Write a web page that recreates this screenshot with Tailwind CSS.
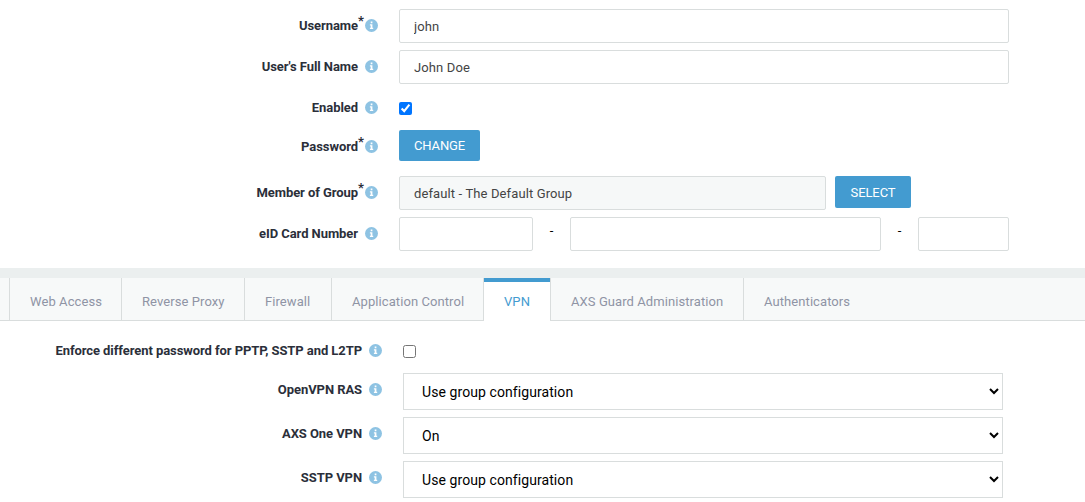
<!DOCTYPE html>
<html lang="en">
<head>
    <meta charset="UTF-8">
    <meta name="viewport" content="width=device-width, initial-scale=1.0">
    <title>User</title>
    <script src="https://cdn.jsdelivr.net/npm/@tailwindcss/browser@4"></script>
</head>
<body class="h-screen overflow-hidden bg-white font-['Roboto',sans-serif] text-[13px] leading-5 tracking-[0.12px] text-[#2b2f3a]">

    <svg class="hidden">
        <symbol id="info" viewBox="0 0 13 13">
            <circle cx="6.5" cy="6.5" r="6.5"/>
            <path fill="#fff" d="M5.7 2.6h1.7v1.6H5.7zM4.9 5.2h2.5v3.5h.8v1.2H4.9V8.7h.8V6.4h-.8z"/>
        </symbol>
    </svg>

    <!-- User details -->
    <form class="h-[268px] pt-[9px]">
        <div class="flex h-[41px] items-start">
            <label class="flex w-[378px] items-center justify-end pt-[7px] font-bold tracking-[-0.07px]">Username<sup class="top-[-5px] w-[7px] text-[13px]">*</sup><svg class="mb-0.5 size-[13px] fill-[#8ec3e3]"><use href="#info"/></svg></label>
            <input type="text" value="john" class="ml-[21px] h-[34px] w-[610px] rounded-xs border border-[#d9dddd] px-[14px] text-[#444]">
        </div>
        <div class="flex h-[41px] items-start">
            <label class="flex w-[378px] items-center justify-end gap-[7px] pt-[7px] font-bold tracking-[-0.07px]">User's Full Name<svg class="mb-0.5 size-[13px] fill-[#8ec3e3]"><use href="#info"/></svg></label>
            <input type="text" value="John Doe" class="ml-[21px] h-[34px] w-[610px] rounded-xs border border-[#d9dddd] px-[14px] text-[#444]">
        </div>
        <div class="flex h-[39px] items-start">
            <label class="flex w-[378px] items-center justify-end gap-[7px] pt-[7px] font-bold tracking-[-0.07px]">Enabled<svg class="mb-0.5 size-[13px] fill-[#8ec3e3]"><use href="#info"/></svg></label>
            <input type="checkbox" checked class="mt-[11px] ml-[21px] size-[13px]">
        </div>
        <div class="flex h-[46px] items-start">
            <label class="flex w-[378px] items-center justify-end pt-[7px] font-bold tracking-[-0.07px]">Password<sup class="top-[-5px] w-[7px] text-[13px]">*</sup><svg class="mb-0.5 size-[13px] fill-[#8ec3e3]"><use href="#info"/></svg></label>
            <button type="button" class="ml-[21px] h-[31px] w-[81px] rounded-xs bg-[#439bd0] tracking-[-0.1px] text-white">CHANGE</button>
        </div>
        <div class="flex h-[41px] items-start">
            <label class="flex w-[378px] items-center justify-end pt-[7px] font-bold tracking-[-0.07px]">Member of Group<sup class="top-[-5px] w-[7px] text-[13px]">*</sup><svg class="mb-0.5 size-[13px] fill-[#8ec3e3]"><use href="#info"/></svg></label>
            <input type="text" readonly value="default - The Default Group" class="ml-[21px] h-[34px] w-[427px] rounded-xs border border-[#d9dddd] bg-[#f6f8f8] px-[14px] text-[#444]">
            <button type="button" class="ml-[9px] h-[32px] w-[76px] rounded-xs bg-[#439bd0] pt-px tracking-[-0.1px] text-white">SELECT</button>
        </div>
        <div class="flex h-[34px] items-start">
            <label class="flex w-[378px] items-center justify-end gap-[7px] pt-[7px] font-bold tracking-[-0.07px]">eID Card Number<svg class="mb-0.5 size-[13px] fill-[#8ec3e3]"><use href="#info"/></svg></label>
            <input type="text" class="ml-[21px] h-[34px] w-[134px] rounded-xs border border-[#d9dddd]">
            <span class="w-[37px] pt-1 text-center text-black">-</span>
            <input type="text" class="h-[34px] w-[311px] rounded-xs border border-[#d9dddd]">
            <span class="w-[37px] pt-1 text-center text-black">-</span>
            <input type="text" class="h-[34px] w-[91px] rounded-xs border border-[#d9dddd]">
        </div>
    </form>

    <!-- Tabs -->
    <nav class="flex h-[53px] border-t-[10px] border-[#ebefef] bg-[#f7f9f9] tracking-[0.08px] text-[#8f94a5]">
        <div class="w-[9px] border-b border-[#d9dddd]"></div>
        <a class="w-[112px] border-b border-l border-[#d9dddd] pt-[14px] pl-5 whitespace-nowrap">Web Access</a>
        <a class="w-[123px] border-b border-l border-[#d9dddd] pt-[14px] pl-5 whitespace-nowrap">Reverse Proxy</a>
        <a class="w-[87px] border-b border-l border-[#d9dddd] pt-[14px] pl-5 whitespace-nowrap">Firewall</a>
        <a class="w-[152px] border-b border-l border-[#d9dddd] pt-[14px] pl-5 whitespace-nowrap">Application Control</a>
        <div class="flex w-[67px] border-l border-[#d9dddd]">
            <a class="w-full border-t-4 border-[#439bd0] bg-white pt-[10px] pl-5 text-[#439bd0]">VPN</a>
        </div>
        <a class="w-[193px] border-b border-l border-[#d9dddd] pt-[14px] pl-5 whitespace-nowrap">AXS Guard Administration</a>
        <a class="flex-1 border-b border-l border-[#d9dddd] pt-[14px] pl-5 whitespace-nowrap">Authenticators</a>
    </nav>

    <!-- VPN settings -->
    <form class="pt-5">
        <div class="flex h-8 items-start">
            <label class="flex w-[382px] items-center justify-end gap-[7px] font-bold tracking-[-0.07px]">Enforce different password for PPTP, SSTP and L2TP<svg class="mb-0.5 size-[13px] fill-[#8ec3e3]"><use href="#info"/></svg></label>
            <input type="checkbox" class="mt-1 ml-[21px] size-[13px]">
        </div>
        <div class="flex h-11 items-start">
            <label class="flex w-[382px] items-center justify-end gap-[7px] pt-[7px] font-bold tracking-[-0.07px]">OpenVPN RAS<svg class="mb-0.5 size-[13px] fill-[#8ec3e3]"><use href="#info"/></svg></label>
            <select class="ml-[21px] h-[37px] w-[600px] border border-[#d9dddd] bg-white px-[14px] text-sm tracking-[0.08px] text-black">
                <option>Use group configuration</option>
            </select>
        </div>
        <div class="flex h-11 items-start">
            <label class="flex w-[382px] items-center justify-end gap-[7px] pt-[7px] font-bold tracking-[-0.07px]">AXS One VPN<svg class="mb-0.5 size-[13px] fill-[#8ec3e3]"><use href="#info"/></svg></label>
            <select class="ml-[21px] h-[37px] w-[600px] border border-[#d9dddd] bg-white px-[14px] text-sm tracking-[0.08px] text-black">
                <option>On</option>
            </select>
        </div>
        <div class="flex h-11 items-start">
            <label class="flex w-[382px] items-center justify-end gap-[7px] pt-[7px] font-bold tracking-[-0.07px]">SSTP VPN<svg class="mb-0.5 size-[13px] fill-[#8ec3e3]"><use href="#info"/></svg></label>
            <select class="ml-[21px] h-[37px] w-[600px] border border-[#d9dddd] bg-white px-[14px] text-sm tracking-[0.08px] text-black">
                <option>Use group configuration</option>
            </select>
        </div>
    </form>

</body>
</html>
